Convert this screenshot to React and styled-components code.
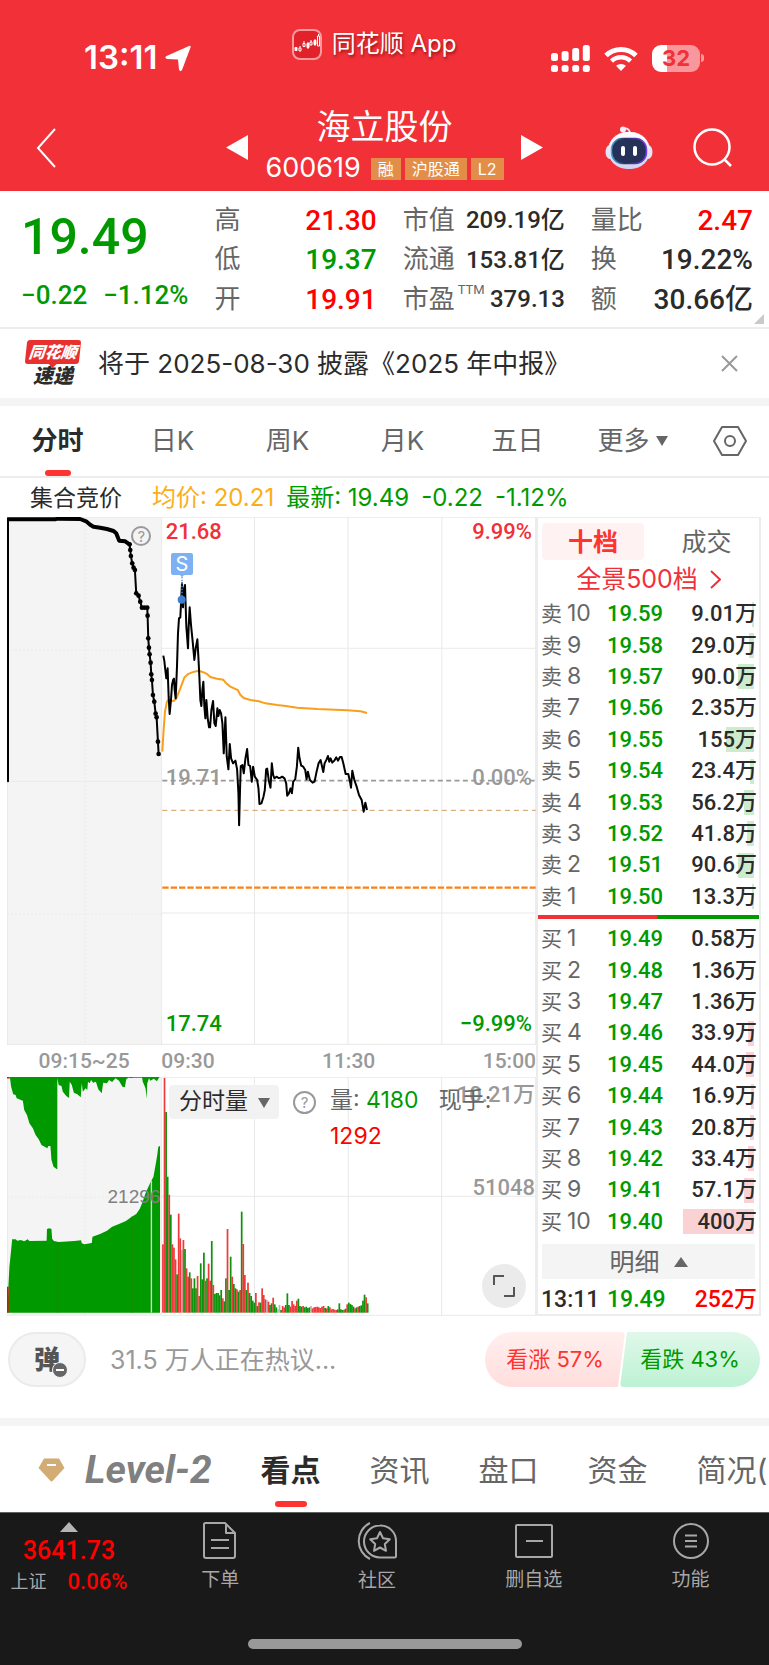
import styled, { createGlobalStyle, css } from "styled-components";

const colors = {
  brand: "#f13038",
  up: "#ff0000",
  down: "#009a00",
  ink: "#2b2b2b",
  muted: "#666",
  faint: "#999",
  line: "#ececec",
  band: "#f4f4f4",
  tag: "#e38e48",
  accent: "#fd342f",
};

const sans = css`font-family: Inter, "Noto Sans CJK SC", sans-serif;`;
const digits = css`font-family: Roboto, "Noto Sans CJK SC", sans-serif;`;

const GlobalStyle = createGlobalStyle`
  * { box-sizing: border-box; }

  body {
    margin: 0;
    background: #fff;
    color: ${colors.ink};
    line-height: 1.2;
    ${sans}
  }

  button, select {
    margin: 0;
    padding: 0;
    border: 0;
    background: none;
    color: inherit;
    font: inherit;
    cursor: pointer;
  }

  a { color: inherit; text-decoration: none; }
  svg { display: block; flex: none; }
`;

const Screen = styled.div`
  display: flex;
  flex-direction: column;
  min-height: 100vh;
  overflow: hidden;
`;

/* ---------- Header ---------- */

const Header = styled.header`
  background: ${colors.brand};
  color: #fff;
`;

const StatusBar = styled.div`
  display: grid;
  grid-template-columns: 1fr auto 1fr;
  align-items: start;
  height: 104px;
  padding: 28px 65px 0 84px;
`;

const StatusSide = styled.div`
  display: flex;
  align-items: center;
  justify-content: ${({ $end }) => ($end ? "flex-end" : "flex-start")};
  gap: ${({ $end }) => ($end ? 14 : 8)}px;
  height: 60px;
  font-size: 33px;
  font-weight: 600;
`;

const AppName = styled.div`
  display: flex;
  align-items: center;
  gap: 10px;
  height: 32px;
  margin-right: 40px;
  font-size: 24px;
  text-shadow: 1px 2px 3px rgba(90, 0, 0, 0.6);
`;

const Battery = styled.div`
  display: flex;
  align-items: center;

  span {
    width: 48px;
    height: 27px;
    border-radius: 9px;
    background: linear-gradient(90deg, #fff 32%, #f8989c 32%);
    color: ${colors.brand};
    font-size: 22px;
    font-weight: 700;
    line-height: 27px;
    text-align: center;
  }

  &::after {
    content: "";
    width: 3px;
    height: 8px;
    margin-left: 1px;
    border-radius: 0 3px 3px 0;
    background: #f8989c;
  }
`;

const TitleBar = styled.div`
  display: grid;
  grid-template-columns: 1fr auto 1fr;
  align-items: center;
  height: 87px;
  padding: 0 36px;
`;

const TitleCenter = styled.div`
  display: flex;
  align-items: center;
  gap: 17px;
`;

const TitleText = styled.div`
  display: flex;
  flex-direction: column;
  align-items: center;

  h1 {
    margin: 0;
    font-size: 34px;
    font-weight: 400;
    line-height: 42px;
  }
`;

const CodeRow = styled.div`
  display: flex;
  align-items: center;
  gap: 4px;
  height: 42px;
  font-size: 27px;

  strong {
    margin-right: 6px;
    font-weight: 400;
  }
`;

const Tag = styled.span`
  padding: 0 7px;
  background: ${colors.tag};
  font-size: 16px;
  line-height: 22px;
`;

const TitleActions = styled.div`
  display: flex;
  align-items: center;
  justify-content: ${({ $start }) => ($start ? "flex-start" : "flex-end")};
  gap: 40px;
`;

/* ---------- Quote ---------- */

const Quote = styled.section`
  position: relative;
  display: grid;
  grid-template-columns: repeat(4, 1fr);
  gap: 26px;
  height: 138px;
  padding: 10px 16px 8px 21px;
  border-bottom: 2px solid ${colors.line};
  ${digits}

  &::after {
    content: "";
    position: absolute;
    right: 5px;
    bottom: 3px;
    border-style: solid;
    border-width: 0 0 10px 10px;
    border-color: transparent transparent #c9c9c9;
  }
`;

const Price = styled.div`
  display: flex;
  flex-direction: column;
  color: ${colors.down};
  font-weight: 500;

  strong {
    font-size: 50px;
    font-weight: 500;
    line-height: 72px;
  }

  div {
    display: flex;
    gap: 16px;
    font-size: 26px;
    line-height: 44px;
    white-space: nowrap;
  }
`;

const Stats = styled.dl`
  display: grid;
  grid-template-rows: repeat(3, 1fr);
  margin: 0;
`;

const tones = { up: colors.up, down: colors.down };

const Stat = styled.div`
  display: flex;
  align-items: center;
  justify-content: space-between;
  white-space: nowrap;

  dt {
    color: ${colors.muted};
    font-size: 26px;
  }

  dd {
    margin: 0;
    color: ${({ $tone }) => tones[$tone] || colors.ink};
    font-size: ${({ $small }) => ($small ? 24 : 28)}px;
    font-weight: 500;
  }

  sup {
    margin-left: 3px;
    font-size: 13px;
    vertical-align: 14px;
    line-height: 0;
  }
`;

/* ---------- Notice ---------- */

const Notice = styled.section`
  display: flex;
  align-items: center;
  gap: 16px;
  height: 77px;
  padding: 0 31px 0 24px;
  border-bottom: 8px solid ${colors.band};
`;

const NoticeBadge = styled.div`
  display: flex;
  flex-direction: column;
  align-items: center;
  width: 58px;
  font-style: italic;
  font-weight: 900;
  color: ${colors.ink};

  b {
    position: relative;
    width: 54px;
    border-radius: 3px;
    background: #e8302f;
    color: #fff;
    font-size: 16px;
    line-height: 24px;
    text-align: center;
    transform: skewX(-6deg);
  }

  b::after {
    content: "";
    position: absolute;
    top: 24px;
    left: 24px;
    border: 4px solid transparent;
    border-top-color: #e8302f;
  }

  span {
    font-size: 20px;
    line-height: 24px;
  }
`;

const NoticeText = styled.a`
  flex: 1;
  font-size: 26px;
  white-space: nowrap;
`;

/* ---------- Period tabs ---------- */

const PeriodTabs = styled.nav`
  display: grid;
  grid-template-columns: repeat(6, 1fr) 79px;
  height: 72px;
  border-bottom: 2px solid ${colors.line};
`;

const activeBar = css`
  &::after {
    content: "";
    position: absolute;
    bottom: 0;
    left: calc(50% - 13px);
    width: 26px;
    height: 6px;
    border-radius: 3px;
    background: ${colors.accent};
  }
`;

const PeriodTab = styled.button`
  position: relative;
  display: flex;
  align-items: center;
  justify-content: center;
  gap: 6px;
  color: ${({ $active }) => ($active ? colors.ink : colors.muted)};
  font-size: 26px;
  font-weight: ${({ $active }) => ($active ? 700 : 400)};
  ${({ $active }) => $active && activeBar}
`;

const Caret = styled.i`
  border-style: solid;
  border-width: ${({ $up }) => ($up ? "0 7px 10px" : "10px 6px 0")};
  border-color: ${({ $up }) =>
    $up ? `transparent transparent ${colors.muted}` : `${colors.muted} transparent transparent`};
`;

const InfoRow = styled.div`
  display: flex;
  align-items: center;
  gap: 12px;
  height: 39px;
  padding: 2px 30px 0;
  color: ${colors.down};
  font-size: 24px;
  white-space: nowrap;

  b {
    margin-right: 18px;
    color: ${colors.ink};
    font-size: 23px;
    font-weight: 400;
  }

  em {
    color: #fbae17;
    font-style: normal;
  }
`;

/* ---------- Charts ---------- */

const Market = styled.main`
  display: flex;
  padding: 0 8px 0 7px;
`;

const Charts = styled.div`
  flex: 1;
  min-width: 0;
`;

const Plot = styled.div`
  position: relative;
  height: ${({ $height }) => $height}px;

  > svg {
    width: 100%;
    height: 100%;
  }
`;

const PlotLabel = styled.span`
  position: absolute;
  top: ${({ $top }) => $top}px;
  ${({ $right }) => ($right ? `right: ${$right}px;` : "left: 30%;")}
  color: ${({ $color }) => $color || colors.faint};
  font-size: 22px;
  font-weight: 500;
  line-height: 24px;
  ${digits}
`;

const AuctionLabel = styled(PlotLabel)`
  left: 19%;
  color: #808080;
  font-family: "Liberation Sans", sans-serif;
  font-size: 19px;
  font-weight: 400;
`;

const HelpButton = styled.button`
  width: ${({ $size }) => $size}px;
  height: ${({ $size }) => $size}px;
  border: 2px solid ${colors.faint};
  border-radius: 50%;
  color: ${colors.faint};
  font-size: 15px;
  line-height: 1;
`;

const AuctionHelp = styled(HelpButton)`
  position: absolute;
  top: 9px;
  left: 23.5%;
`;

const Marker = styled.span`
  position: absolute;
  top: 36px;
  left: 31%;
  width: 22px;
  border-radius: 2px;
  background: #7db1f3;
  color: #fff;
  font-size: 20px;
  line-height: 22px;
  text-align: center;
`;

const TimeAxis = styled.div`
  display: grid;
  grid-template-columns: 154fr 125fr 124fr 125fr;
  height: 32px;
  color: ${colors.faint};
  font-size: 21px;
  font-weight: 500;
  line-height: 32px;
  ${digits}

  span:first-child { text-align: center; }
  span:nth-child(3) { text-align: center; }
  span:last-child { text-align: right; }
`;

const VolumeTools = styled.div`
  position: absolute;
  top: 8px;
  left: 162px;
  display: flex;
  align-items: flex-start;
  gap: 14px;
`;

const IndicatorPicker = styled.label`
  position: relative;
  display: block;

  select {
    width: 110px;
    height: 34px;
    padding: 0 10px;
    border-radius: 4px;
    background: #f2f2f2;
    font-size: 23px;
    appearance: none;
  }

  ${Caret} {
    position: absolute;
    top: 13px;
    right: 9px;
    pointer-events: none;
  }
`;

const VolumeHelp = styled(HelpButton)`
  margin-top: 6px;
`;

const VolumeText = styled.p`
  display: flex;
  flex-wrap: wrap;
  gap: 6px 20px;
  width: 174px;
  margin: 0;
  color: ${colors.muted};
  font-size: 23px;
  line-height: 30px;
`;

const ExpandButton = styled.button`
  position: absolute;
  right: 10px;
  bottom: 8px;
  display: grid;
  place-items: center;
  width: 44px;
  height: 44px;
  border-radius: 50%;
  background: #ebebeb;
  color: #555;
`;

/* ---------- Order book ---------- */

const Book = styled.aside`
  display: flex;
  flex-direction: column;
  width: 225px;
  border: 2px solid ${colors.line};
  border-top-width: 1px;
`;

const BookTabs = styled.div`
  display: grid;
  grid-template-columns: 102px 1fr;
  height: 42px;
  padding: 5px 4px 0;
`;

const BookTab = styled.button`
  border-radius: 4px;
  background: ${({ $active }) => ($active ? "#fef3f2" : "none")};
  color: ${({ $active }) => ($active ? colors.accent : colors.muted)};
  font-size: 25px;
  font-weight: ${({ $active }) => ($active ? 700 : 400)};
  ${({ $active }) => !$active && "padding-left: 14px;"}
`;

const DepthLink = styled.a`
  display: flex;
  align-items: center;
  justify-content: center;
  gap: 12px;
  height: 38px;
  color: ${colors.brand};
  font-size: 25px;
`;

const BookTable = styled.table`
  width: 100%;
  height: 314px;
  border-collapse: collapse;
  table-layout: fixed;
  font-weight: 500;
  font-size: 22px;
  line-height: 25px;
  white-space: nowrap;
  ${digits}

  th, td { padding: 0; }

  th {
    width: 69px;
    padding-left: 3px;
    color: ${colors.muted};
    font-size: 21px;
    font-weight: 400;
    text-align: left;
    ${sans}
  }

  th span {
    margin-left: 5px;
    font-size: 23px;
  }

  td { color: ${colors.down}; }

  td:last-child {
    position: relative;
    padding-right: 2px;
    color: ${colors.ink};
    text-align: right;
  }
`;

const DepthBar = styled.i`
  position: absolute;
  top: calc(50% - 12px);
  right: 5px;
  z-index: -1;
  height: 25px;
  background: ${({ $side }) => ($side === "sell" ? "#cdebcd" : "#fbd2d4")};
`;

const BalanceBar = styled.div`
  height: 4px;
  margin: 3px 0 4px;
  background: linear-gradient(90deg, ${colors.brand} 54%, ${colors.down} 54%);
`;

const DetailButton = styled.button`
  display: flex;
  align-items: center;
  justify-content: center;
  gap: 14px;
  height: 35px;
  margin: 7px 4px 0;
  background: ${colors.band};
  color: ${colors.muted};
  font-size: 25px;
`;

const LastTrade = styled.div`
  display: grid;
  grid-template-columns: 66px 1fr auto;
  flex: 1;
  align-items: center;
  padding: 6px 2px 0 3px;
  font-size: 23px;
  font-weight: 500;
  ${digits}
`;

const Tone = styled.span`
  color: ${({ $tone }) => tones[$tone]};
`;

/* ---------- Discussion ---------- */

const Discussion = styled.section`
  display: flex;
  align-items: center;
  height: 110px;
  padding: 16px 9px 31px 8px;
  border-bottom: 8px solid ${colors.band};
`;

const BulletButton = styled.button`
  display: grid;
  place-items: center;
  width: 78px;
  height: 55px;
  border: 2px solid #ebebeb;
  border-radius: 28px;
  background: #f5f5f5;
  color: #555;
  font-size: 26px;
  font-weight: 900;
  line-height: 1;

  span {
    position: relative;
  }

  svg {
    position: absolute;
    right: -8px;
    bottom: -5px;
  }
`;

const Talk = styled.a`
  flex: 1;
  padding-left: 24px;
  color: ${colors.faint};
  font-size: 25px;
`;

const Vote = styled.button`
  width: 140px;
  height: 55px;
  margin-left: -5px;
  color: ${({ $side }) => ($side === "up" ? colors.accent : colors.down)};
  font-size: 22px;
  ${({ $side }) =>
    $side === "up"
      ? css`
          border-radius: 28px 4px 4px 28px;
          background: linear-gradient(#ffefee, #ffdedd);
          clip-path: polygon(0 0, 100% 0, 95% 100%, 0 100%);
        `
      : css`
          border-radius: 4px 28px 28px 4px;
          background: linear-gradient(#e0f8ea, #bdf2d3);
          clip-path: polygon(5% 0, 100% 0, 100% 100%, 0 100%);
        `}
`;

/* ---------- Content tabs ---------- */

const ContentTabs = styled.nav`
  display: flex;
  align-items: center;
  gap: 49px;
  height: 86px;
  padding: 2px 0 0 38px;
  font-size: 30px;
  white-space: nowrap;
`;

const LevelTab = styled.a`
  display: flex;
  align-items: center;
  gap: 20px;
  color: #808080;
  font-size: 39px;
  font-style: italic;
  font-weight: 700;
  ${digits}
`;

const ContentTab = styled.a`
  position: relative;
  color: ${({ $active }) => ($active ? colors.ink : colors.muted)};
  font-weight: ${({ $active }) => ($active ? 700 : 400)};
  line-height: 73px;
  ${({ $active }) => $active && activeBar}

  &::after {
    left: calc(50% - 16px);
    width: 32px;
  }
`;

/* ---------- Bottom bar ---------- */

const BottomBar = styled.footer`
  display: flex;
  flex: 1;
  flex-direction: column;
  justify-content: space-between;
  align-items: center;
  padding-bottom: 16px;
  border-top: 1px solid #5c625e;
  background: #191919;
  color: #a8a8a8;
`;

const BottomNav = styled.nav`
  display: grid;
  grid-template-columns: 142px repeat(4, 1fr);
  width: 100%;
`;

const IndexQuote = styled.a`
  display: flex;
  flex-direction: column;
  align-items: center;
  padding: 9px 4px 0 0;
  color: ${colors.up};
  font-weight: 500;
  ${digits}

  ${Caret} {
    border-width: 0 9px 10px;
    border-bottom-color: #b5b5b5;
  }

  strong {
    font-size: 25px;
    font-weight: 500;
    line-height: 38px;
  }

  div {
    display: flex;
    align-items: center;
    gap: 21px;
    font-size: 22px;
    line-height: 24px;
  }

  small {
    color: #a8a8a8;
    font-size: 18px;
    font-weight: 400;
  }
`;

const NavItem = styled.a`
  display: flex;
  flex-direction: column;
  align-items: center;
  gap: 7px;
  padding-top: 9px;
  font-size: 19px;
  line-height: 28px;
`;

const HomeIndicator = styled.div`
  width: 274px;
  height: 10px;
  border-radius: 5px;
  background: #999;
`;

/* ---------- Data ---------- */

const stats = [
  [
    { label: "高", value: "21.30", tone: "up" },
    { label: "低", value: "19.37", tone: "down" },
    { label: "开", value: "19.91", tone: "up" },
  ],
  [
    { label: "市值", value: "209.19亿", small: true },
    { label: "流通", value: "153.81亿", small: true },
    { label: "市盈", note: "TTM", value: "379.13", small: true },
  ],
  [
    { label: "量比", value: "2.47", tone: "up" },
    { label: "换", value: "19.22%" },
    { label: "额", value: "30.66亿" },
  ],
];

const sells = [
  ["10", "19.59", "9.01"],
  ["9", "19.58", "29.0"],
  ["8", "19.57", "90.0"],
  ["7", "19.56", "2.35"],
  ["6", "19.55", "155"],
  ["5", "19.54", "23.4"],
  ["4", "19.53", "56.2"],
  ["3", "19.52", "41.8"],
  ["2", "19.51", "90.6"],
  ["1", "19.50", "13.3"],
];

const buys = [
  ["1", "19.49", "0.58"],
  ["2", "19.48", "1.36"],
  ["3", "19.47", "1.36"],
  ["4", "19.46", "33.9"],
  ["5", "19.45", "44.0"],
  ["6", "19.44", "16.9"],
  ["7", "19.43", "20.8"],
  ["8", "19.42", "33.4"],
  ["9", "19.41", "57.1"],
  ["10", "19.40", "400"],
];

const pricePoints =
  "489,437 492,452 495,480 498,505 500,490 502,475 505,560 508,612 512,570 515,525 519,508 521,506 523,540 526,565 530,470 533,370 536,325 540,322 545,220 548,292 551,240 554,225 558,350 563,415 565,350 568,292 572,345 577,395 582,450 586,415 591,388 594,440 597,500 600,570 603,588 606,540 609,515 612,590 615,625 618,570 622,625 626,652 629,652 633,600 638,573 642,640 646,648 651,595 654,618 658,600 662,610 666,640 670,730 675,622 679,740 684,778 688,702 692,745 698,760 705,752 710,778 714,850 716,946 719,830 721,768 726,765 730,790 735,745 740,717 744,765 749,768 754,815 758,770 763,800 770,810 774,835 777,882 783,880 789,860 793,840 797,778 800,776 805,812 810,833 814,760 818,795 822,805 828,800 834,804 840,803 845,800 852,805 857,820 860,857 865,850 870,835 874,850 878,815 884,808 889,770 893,713 897,745 902,767 908,770 914,780 918,808 922,785 928,810 936,818 942,815 948,785 954,760 960,750 964,768 968,786 972,760 978,748 982,738 986,755 990,745 995,758 1001,752 1007,742 1012,752 1018,741 1023,741 1028,760 1035,792 1043,792 1048,815 1051,833 1055,782 1061,810 1068,830 1075,855 1083,870 1089,905 1094,878 1099,900";

const averagePoints =
  "486,725 490,660 494,605 500,575 505,568 512,573 520,573 528,565 540,535 552,503 563,492 575,487 590,483 600,484 612,488 620,492 630,501 650,506 668,509 676,518 690,530 712,540 720,555 730,564 750,570 775,574 795,580 830,585 850,587 890,593 950,597 1040,601 1080,604 1099,609";

const auctionHead =
  "24,28 165,28 172,26 240,27 258,34 270,44 280,50 300,53 320,57 340,63 348,70 354,85 357,92 375,94 388,103";

const auctionTicks =
  "388,103 390,120 392,138 396,160 400,173 404,180 408,250 415,257 420,275 425,293 433,293 441,293 442,317 444,385 446,413 448,433 451,458 453,493 455,510 458,555 462,575 466,611 469,622 473,695 475,732";

const cancelled =
  "28,49 32,80 38,103 45,105 48,115 66,122 70,150 78,165 85,190 95,205 103,225 112,238 120,255 137,265 140,258 146,258 149,300 155,320 165,328 166,328 166,55 170,75 178,78 182,95 192,108 200,114 202,65 208,75 214,98 224,103 234,112 237,70 240,95 248,85 253,90 255,65 260,70 264,60 270,68 278,65 285,88 295,100 299,68 310,70 316,60 325,66 335,55 345,62 355,80 362,82 366,58 372,53 412,53 414,65 422,85 425,116 427,70 432,55 436,62 446,56 455,64 460,55 464,49";

const matched =
  "22,758 24,680 27,620 32,570 35,538 45,538 50,542 60,540 70,544 80,538 85,543 135,542 136,507 143,505 149,507 151,536 156,543 170,546 215,543 235,541 237,550 245,553 266,549 268,530 290,522 310,512 325,500 345,492 365,483 382,470 395,462 405,447 412,430 422,400 435,370 445,350 452,310 456,285 459,260 464,258 464,758";

// minute volume: colour letter followed by the top of the bar
const volumeBars =
  "r553 r54 g156 g350 r404 g464 r553 r563 r598 g643 r461 r535 x570 r540 g567 r625 r650 g637 r655 g685 g655 g685 r648 r708 g610 g658 g578 r662 g655 r611 r662 g543 r675 g702 g699 g699 g706 g690 r715 g724 g655 r507 g690 g590 r650 g672 g685 r688 g695 r690 g455 r552 r645 g690 r668 g699 g708 g722 g728 r699 g738 r727 g728 r685 r705 r718 x720 r725 g735 g730 r713 g733 g742 x748 x735 g750 r738 r742 g735 g700 g735 r740 r723 r733 r738 r722 g716 g738 g740 r738 g742 g740 g744 g742 x738 r745 r742 r741 r740 r742 r744 r740 r738 g744 r745 g738 r742 r748 r747 r749 r750 g748 g730 g748 g750 r749 g746 r733 g728 g732 g735 g740 r745 g742 r740 g738 g736 g722 g704 r712 g730".split(" ");

const barFill = { r: "#ee3a3a", g: "#0d930d", x: "#b5b5b5" };

/* ---------- Icons ---------- */

const stroke = {
  fill: "none",
  stroke: "currentColor",
  strokeWidth: 2,
  strokeLinejoin: "round",
};

const LocationIcon = () => (
  <svg width="26" height="27" viewBox="0 0 26 27" fill="#fff">
    <path d="M24 1q2-1 1.500 1.500L17 25q-1.500 2.500-3-.5L13 14.500 2 14q-3-1-.5-3z" />
  </svg>
);

const AppIcon = () => (
  <svg width="30" height="31" viewBox="0 0 30 31" fill="none">
    <rect x="1" y="1" width="28" height="29" rx="7" fill="#e2222b" stroke="#f69a9e" strokeWidth="2" />
    <path d="M3 18.500h2v3H3zM15 14.500h2v4h-2zM22 11.500h2v4h-2z" fill="#fff" stroke="#fff" />
    <path d="M7 19h2v3H7zM11 14.500h2v3h-2zM18 13h2v3h-2zM25.500 7h2v10h-2z" stroke="#fff" />
    <path d="M8 17v2M12 12v2M16 13v7M19 11v2M23 10v7M26.500 5v2" stroke="#fff" />
  </svg>
);

const SignalIcon = () => (
  <svg width="39" height="27" viewBox="0 0 39 27" fill="#fff">
    {[8, 6, 3, 0].map((top, i) => (
      <rect key={top} x={i * 10.6} y={top} width="7" height={16 - top} rx="2.500" />
    ))}
    {[0, 1, 2, 3].map((i) => (
      <rect key={i} x={i * 10.6} y="20" width="7" height="7" rx="2.500" />
    ))}
  </svg>
);

const WifiIcon = () => (
  <svg width="34" height="25" viewBox="0 0 34 25" fill="none" stroke="#fff" strokeWidth="5">
    <path d="M2 9.500a21.500 21.500 0 0 1 30 0" />
    <path d="M7.500 15.200a13.500 13.500 0 0 1 19 0" strokeWidth="4.500" />
    <path d="M17 25l-5-5.200a7.500 7.500 0 0 1 10 0z" fill="#fff" stroke="none" />
  </svg>
);

const BackIcon = () => (
  <svg width="20" height="40" viewBox="0 0 20 40" fill="none" stroke="#fff" strokeWidth="2">
    <path d="M19 1L2 20l17 19" />
  </svg>
);

const RobotIcon = () => (
  <svg width="48" height="44" viewBox="0 0 48 44">
    <defs>
      <linearGradient id="shell" x1="0" y1="0" x2="0" y2="1">
        <stop offset="0" stopColor="#fff" />
        <stop offset="1" stopColor="#cfd3f3" />
      </linearGradient>
      <linearGradient id="rim" x1="0" y1="0" x2="1" y2="0">
        <stop offset="0" stopColor="#43a6d0" />
        <stop offset=".4" stopColor="#2c3360" />
        <stop offset="1" stopColor="#7a3df0" />
      </linearGradient>
    </defs>
    <path d="M18 3q6-2 7 4" fill="none" stroke="#e8e6fa" strokeWidth="2" />
    <circle cx="18" cy="3.500" r="3" fill="#f1effb" />
    <ellipse cx="5" cy="26" rx="4.500" ry="7" fill="#e4e3f8" />
    <ellipse cx="43" cy="26" rx="4.500" ry="7" fill="#e4e3f8" />
    <rect x="3" y="6" width="42" height="37" rx="19" fill="url(#shell)" />
    <rect x="6.500" y="12.500" width="35" height="25" rx="11" fill="#26315a" stroke="url(#rim)" strokeWidth="1.500" />
    <rect x="16" y="20" width="4" height="10" rx="2" fill="#fff" />
    <rect x="28" y="20" width="4" height="10" rx="2" fill="#fff" />
  </svg>
);

const SearchIcon = () => (
  <svg width="40" height="40" viewBox="0 0 40 40" fill="none" stroke="#fff" strokeWidth="2.500">
    <circle cx="19" cy="19" r="17.500" />
    <path d="M31 31l7 7" />
  </svg>
);

const CloseIcon = () => (
  <svg width="17" height="17" viewBox="0 0 17 17" fill="none" stroke={colors.faint} strokeWidth="2">
    <path d="M1 1l15 15M16 1L1 16" />
  </svg>
);

const SettingsIcon = () => (
  <svg width="34" height="30" viewBox="0 0 34 30" {...stroke}>
    <path d="M9 1h16l8 14-8 14H9L1 15z" />
    <circle cx="17" cy="15" r="5" />
  </svg>
);

const MinusIcon = () => (
  <svg width="16" height="16" viewBox="0 0 16 16">
    <circle cx="8" cy="8" r="7.500" fill="#666" stroke="#f5f5f5" />
    <path d="M4 8h8" stroke="#fff" strokeWidth="2" />
  </svg>
);

const GemIcon = () => (
  <svg width="27" height="24" viewBox="0 0 27 24">
    <path d="M6 .500h15L26.500 10 14.500 23q-1 1-2 0L.500 10z" fill="#d2ac74" />
    <path d="M9 7h9" stroke="#fff" strokeWidth="2" />
  </svg>
);

const OrderIcon = () => (
  <svg width="34" height="37" viewBox="0 0 34 37" {...stroke}>
    <path d="M2 1h20l10 10v23q0 2-2 2H3q-2 0-2-2V2zM23 2v9h9M8 18h18M8 26h18" />
  </svg>
);

const CommunityIcon = () => (
  <svg width="40" height="38" viewBox="0 0 40 38" {...stroke}>
    <path d="M23 3.500a15.500 15.500 0 0 1 16 15.500v15q0 1.500-1.500 1.500H23a16 16 0 0 1 0-32z" />
    <path d="M13 1a20 20 0 0 0 0 36" />
    <path d="M23 10l3 6.300 6.800.9-5 4.800 1.200 6.800-6-3.300-6 3.300 1.200-6.800-5-4.800 6.800-.9z" />
  </svg>
);

const RemoveIcon = () => (
  <svg width="38" height="37" viewBox="0 0 38 37" {...stroke}>
    <rect x="1" y="3" width="36" height="32" rx="1" />
    <path d="M11 19h17" />
  </svg>
);

const MenuIcon = () => (
  <svg width="36" height="37" viewBox="0 0 36 37" {...stroke}>
    <circle cx="18" cy="19" r="17" />
    <path d="M12 13.500h12M12 19h12M12 24.500h12" />
  </svg>
);

const Arrow = ({ next }) => (
  <svg width="22" height="25" viewBox="0 0 22 25" fill="#fff">
    <path d={next ? "M0 0v25l22-12.500z" : "M22 0v25L0 12.500z"} />
  </svg>
);

/* ---------- Parts ---------- */

function PriceChart() {
  return (
    <svg viewBox="21 21 1584 1584" preserveAspectRatio="none" fill="none">
      <rect x="21" y="21" width="462" height="1584" fill="#f4f4f4" />
      <g stroke="#e9e9e9" strokeWidth="3">
        <path d="M21 22h1584M21 1603h1584M22 21v1584M484 21v1584M762 21v1584M1042 21v1584M1323 21v1584M1604 21v1584" />
        <path d="M484 415h1120M484 1209h1120M21 814h463" />
        <path d="M255 21v1584M21 420h463M21 1213h463" strokeDasharray="6 6" />
      </g>
      <path d="M486 812h1118" stroke="#999" strokeWidth="5" strokeDasharray="15 10" />
      <path d="M486 901h1118" stroke="#dcae7c" strokeWidth="4" strokeDasharray="15 12" />
      <path d="M486 1133h1118" stroke="#f98316" strokeWidth="7" strokeDasharray="19 6" />
      <polyline points={averagePoints} stroke="#f99f1e" strokeWidth="6" />
      <polyline points={pricePoints} stroke="#000" strokeWidth="6" strokeLinejoin="round" />
      <g stroke="#000" strokeLinejoin="round" strokeLinecap="round">
        <path d="M24 28v786" strokeWidth="6" />
        <polyline points={auctionHead} strokeWidth="12" />
        <polyline points={auctionTicks} strokeWidth="6" />
      </g>
      {auctionTicks.split(" ").map((point) => {
        const [x, y] = point.split(",");
        return <circle key={point} cx={x} cy={y} r="7" fill="#000" />;
      })}
      <path d="M545 200v66" stroke="#4d8fe0" strokeWidth="4" strokeDasharray="5 4" />
      <path d="M534 191h22l-11 10z" fill="#7db1f3" />
      <circle cx="544" cy="269" r="12" fill="#3f7fd0" />
    </svg>
  );
}

function VolumeChart() {
  return (
    <svg viewBox="20 51 1535 717" preserveAspectRatio="none" fill="none">
      <rect x="20" y="51" width="448" height="714" fill="#f4f4f4" />
      <g stroke="#e9e9e9" strokeWidth="3">
        <path d="M20 52h1535M20 766h1535M21 51v714M468 51v714M738 51v714M1010 51v714M1281 51v714M1554 51v714M468 409h1087" />
        <path d="M246 51v714M20 412h448" strokeDasharray="6 6" />
      </g>
      <g fill={colors.down}>
        <polygon points={cancelled} />
        <polygon points={matched} />
      </g>
      <path d="M20 53h8M22 680v78M376 51h8" stroke="#f00" strokeWidth="5" />
      <path d="M167 546v212M382 470v288" stroke="#6f5c00" strokeWidth="2" />
      <path d="M439 362v396" stroke="#d5d5d5" strokeWidth="4" />
      {volumeBars.map((bar, i) => {
        const top = Number(bar.slice(1));
        return <rect key={i} x={470 + i * 4.57} y={top} width="5" height={758 - top} fill={barFill[bar[0]]} />;
      })}
    </svg>
  );
}

function BookSide({ side, rows }) {
  const name = side === "sell" ? "卖" : "买";
  return (
    <BookTable>
      <tbody>
        {rows.map(([level, price, volume]) => (
          <tr key={level}>
            <th scope="row">
              {name}
              <span>{level}</span>
            </th>
            <td>{price}</td>
            <td>
              <DepthBar $side={side} style={{ width: Math.round(Number(volume) * 0.178) }} />
              {volume}万
            </td>
          </tr>
        ))}
      </tbody>
    </BookTable>
  );
}

function OrderBook() {
  return (
    <Book>
      <BookTabs>
        <BookTab $active>十档</BookTab>
        <BookTab>成交</BookTab>
      </BookTabs>
      <DepthLink href="#depth">
        全景500档
        <svg width="11" height="19" viewBox="0 0 11 19" {...stroke}>
          <path d="M1 1l9 8.500L1 18" />
        </svg>
      </DepthLink>
      <BookSide side="sell" rows={sells} />
      <BalanceBar />
      <BookSide side="buy" rows={buys} />
      <DetailButton>
        明细
        <Caret $up />
      </DetailButton>
      <LastTrade>
        <span>13:11</span>
        <Tone $tone="down">19.49</Tone>
        <Tone $tone="up">252万</Tone>
      </LastTrade>
    </Book>
  );
}

function App() {
  return (
    <Screen>
      <GlobalStyle />
      <Header>
        <StatusBar>
          <StatusSide>
            13:11
            <LocationIcon />
          </StatusSide>
          <AppName>
            <AppIcon />
            同花顺 App
          </AppName>
          <StatusSide $end>
            <SignalIcon />
            <WifiIcon />
            <Battery>
              <span>32</span>
            </Battery>
          </StatusSide>
        </StatusBar>
        <TitleBar>
          <TitleActions $start>
            <button aria-label="返回">
              <BackIcon />
            </button>
          </TitleActions>
          <TitleCenter>
            <button aria-label="上一只">
              <Arrow />
            </button>
            <TitleText>
              <h1>海立股份</h1>
              <CodeRow>
                <strong>600619</strong>
                <Tag>融</Tag>
                <Tag>沪股通</Tag>
                <Tag>L2</Tag>
              </CodeRow>
            </TitleText>
            <button aria-label="下一只">
              <Arrow next />
            </button>
          </TitleCenter>
          <TitleActions>
            <button aria-label="智能助手">
              <RobotIcon />
            </button>
            <button aria-label="搜索">
              <SearchIcon />
            </button>
          </TitleActions>
        </TitleBar>
      </Header>

      <Quote>
        <Price>
          <strong>19.49</strong>
          <div>
            <span>−0.22</span>
            <span>−1.12%</span>
          </div>
        </Price>
        {stats.map((column) => (
          <Stats key={column[0].label}>
            {column.map(({ label, note, value, tone, small }) => (
              <Stat key={label} $tone={tone} $small={small}>
                <dt>
                  {label}
                  {note && <sup>{note}</sup>}
                </dt>
                <dd>{value}</dd>
              </Stat>
            ))}
          </Stats>
        ))}
      </Quote>

      <Notice>
        <NoticeBadge>
          <b>同花顺</b>
          <span>速递</span>
        </NoticeBadge>
        <NoticeText href="#report">将于 2025-08-30 披露《2025 年中报》</NoticeText>
        <button aria-label="关闭">
          <CloseIcon />
        </button>
      </Notice>

      <PeriodTabs>
        <PeriodTab $active>分时</PeriodTab>
        <PeriodTab>日K</PeriodTab>
        <PeriodTab>周K</PeriodTab>
        <PeriodTab>月K</PeriodTab>
        <PeriodTab>五日</PeriodTab>
        <PeriodTab>
          更多
          <Caret />
        </PeriodTab>
        <PeriodTab aria-label="设置">
          <SettingsIcon />
        </PeriodTab>
      </PeriodTabs>
      <InfoRow>
        <b>集合竞价</b>
        <em>均价: 20.21</em>
        <span>最新: 19.49</span>
        <span>-0.22</span>
        <span>-1.12%</span>
      </InfoRow>

      <Market>
        <Charts>
          <Plot $height={528}>
            <PriceChart />
            <AuctionHelp $size={20} aria-label="集合竞价说明">?</AuctionHelp>
            <PlotLabel $top={3} $color={colors.brand}>21.68</PlotLabel>
            <PlotLabel $top={3} $right={4} $color={colors.brand}>9.99%</PlotLabel>
            <PlotLabel $top={249}>19.71</PlotLabel>
            <PlotLabel $top={249} $right={4}>0.00%</PlotLabel>
            <PlotLabel $top={495} $color={colors.down}>17.74</PlotLabel>
            <PlotLabel $top={495} $right={4} $color={colors.down}>−9.99%</PlotLabel>
            <Marker>S</Marker>
          </Plot>
          <TimeAxis>
            <span>09:15~25</span>
            <span>09:30</span>
            <span>11:30</span>
            <span>15:00</span>
          </TimeAxis>
          <Plot $height={239}>
            <VolumeChart />
            <AuctionLabel $top={108}>21296</AuctionLabel>
            <PlotLabel $top={6} $right={1}>10.21万</PlotLabel>
            <PlotLabel $top={99} $right={1}>51048</PlotLabel>
            <VolumeTools>
              <IndicatorPicker>
                <select aria-label="指标" defaultValue="分时量">
                  <option>分时量</option>
                </select>
                <Caret />
              </IndicatorPicker>
              <VolumeHelp $size={23} aria-label="分时量说明">?</VolumeHelp>
              <VolumeText>
                <span>
                  量: <Tone $tone="down">4180</Tone>
                </span>
                <span>现手:</span>
                <Tone $tone="up">1292</Tone>
              </VolumeText>
            </VolumeTools>
            <ExpandButton aria-label="全屏">
              <svg width="24" height="24" viewBox="0 0 24 24" {...stroke}>
                <path d="M2 11V2h10M22 13v9H12" />
              </svg>
            </ExpandButton>
          </Plot>
        </Charts>
        <OrderBook />
      </Market>

      <Discussion>
        <BulletButton aria-label="弹幕">
          <span>
            弹
            <MinusIcon />
          </span>
        </BulletButton>
        <Talk href="#talk">31.5 万人正在热议...</Talk>
        <Vote $side="up">看涨 57%</Vote>
        <Vote $side="down">看跌 43%</Vote>
      </Discussion>

      <ContentTabs>
        <LevelTab href="#level2">
          <GemIcon />
          Level-2
        </LevelTab>
        <ContentTab href="#view" $active>看点</ContentTab>
        <ContentTab href="#news">资讯</ContentTab>
        <ContentTab href="#book">盘口</ContentTab>
        <ContentTab href="#funds">资金</ContentTab>
        <ContentTab href="#brief">简况(</ContentTab>
      </ContentTabs>

      <BottomBar>
        <BottomNav>
          <IndexQuote href="#index">
            <Caret $up />
            <strong>3641.73</strong>
            <div>
              <small>上证</small>
              0.06%
            </div>
          </IndexQuote>
          <NavItem href="#order">
            <OrderIcon />
            下单
          </NavItem>
          <NavItem href="#community">
            <CommunityIcon />
            社区
          </NavItem>
          <NavItem href="#remove">
            <RemoveIcon />
            删自选
          </NavItem>
          <NavItem href="#menu">
            <MenuIcon />
            功能
          </NavItem>
        </BottomNav>
        <HomeIndicator />
      </BottomBar>
    </Screen>
  );
}

export default App;
